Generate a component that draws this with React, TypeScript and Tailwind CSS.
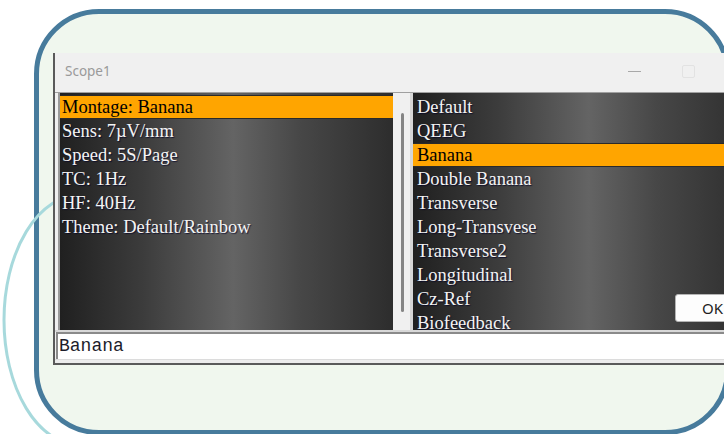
import React from 'react';

const settings = [
  'Montage: Banana',
  'Sens: 7µV/mm',
  'Speed: 5S/Page',
  'TC: 1Hz',
  'HF: 40Hz',
  'Theme: Default/Rainbow',
];

const montages = [
  'Default',
  'QEEG',
  'Banana',
  'Double Banana',
  'Transverse',
  'Long-Transvese',
  'Transverse2',
  'Longitudinal',
  'Cz-Ref',
  'Biofeedback',
];

const listBg =
  'bg-[linear-gradient(to_right,#202020_0%,#3c3c3c_25%,#646464_52%,#474747_72%,#2d2d2d_100%)]';

interface ListBoxProps {
  items: string[];
  selected: number;
  width: string;
  indent: string;
}

const ListBox: React.FC<ListBoxProps> = ({ items, selected, width, indent }) => (
  <div className={`${width} h-[237px] overflow-hidden pt-[2px] ${listBg}`}>
    {items.map((item, i) => (
      <div
        key={item}
        className={`h-6 ${indent} leading-[22px] whitespace-nowrap text-[18.5px] font-['Liberation_Serif',serif] ${
          i === selected
            ? 'bg-[#ffa500] text-black border-y border-[#2a2a2a]'
            : 'text-[#f4f4f4] border-y border-transparent [text-shadow:1px_1px_1px_rgba(0,0,40,0.7)]'
        }`}
      >
        {item}
      </div>
    ))}
  </div>
);

export default function App() {
  return (
    <div className="relative w-[724px] h-[434px] overflow-hidden bg-white">
      {/* thin teal swoosh behind the dialog */}
      <svg className="absolute inset-0 z-[1] pointer-events-none" width="724" height="434">
        <path d="M 80 195 A 76 125 0 0 0 80 445" fill="none" stroke="#a7d9dc" strokeWidth="3" />
      </svg>

      <div className="ml-[34px] mt-[9px] w-[696px] h-[426px] rounded-[65px] border-[5px] border-[#477b9c] bg-[#f0f7ee]">
        <div className="relative z-[2] ml-[14px] mt-[39px] w-[720px] border-l-2 border-b-2 border-[#5a5a5a] bg-[#f0f0f0]">
          {/* title bar */}
          <div className="flex h-[39px] items-center pb-[2px]">
            <span className="pl-[10px] text-[13.5px] text-[#9a9a9a] font-['Noto_Sans',sans-serif]">Scope1</span>
            <div className="flex-1" />
            <div className="w-[13px] h-px bg-[#a8a8a8]" />
            <div className="ml-[41px] w-[13px] h-[13px] rounded-[2px] border border-[#e2e2e2]" />
            <div className="w-[78px]" />
          </div>

          {/* list boxes */}
          <div className="flex border-t border-[#a0a0a0] pl-[3px]">
            <div className="border-l-2 border-[#9a9a9a]">
              <ListBox items={settings} selected={0} width="w-[333px]" indent="pl-[2px]" />
            </div>
            <div className="w-[17px] bg-[#f0f0f0] pt-[20px]">
              <div className="ml-[8px] w-[3px] h-[199px] rounded-full bg-[#858585]" />
            </div>
            <div className="border-l-[3px] border-[#d6d6d6]">
              <ListBox items={montages} selected={2} width="w-[338px]" indent="pl-[4px]" />
            </div>
          </div>

          {/* edit line */}
          <div className="border-t-2 border-[#d8d8d8]">
            <div className="ml-px border-t-2 border-l-2 border-[#8a8a8a] bg-white h-[27px] pl-[1px] flex items-center text-[18px] text-[#1c1c2a] [font-family:'Liberation_Mono',monospace]">
              Banana
            </div>
          </div>
          <div className="h-[4px] border-t border-[#dcdcdc] bg-[#ececec]" />

          <button className="absolute left-[620px] top-[241px] w-[75px] h-[28px] rounded-[3px] border border-[#b4b4b4] bg-[#fdfdfd] text-[15px] text-[#1e1e1e] font-['Noto_Sans',sans-serif]">
            OK
          </button>
        </div>
      </div>
    </div>
  );
}
